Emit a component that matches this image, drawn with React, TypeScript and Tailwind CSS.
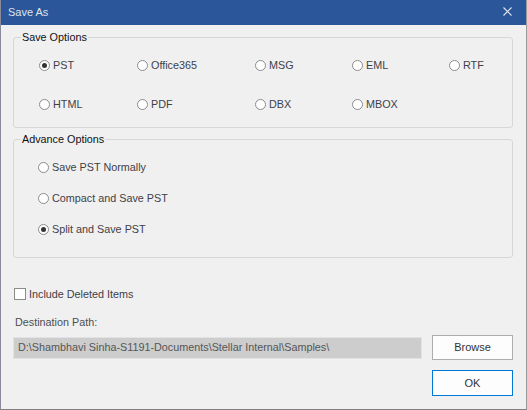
import React from "react";

function Radio({ label, checked = false }: { label: string; checked?: boolean }) {
  return (
    <div className="flex items-center gap-[3px] h-[16px]">
      <span className="w-[11px] h-[11px] rounded-full border border-[#8c8c8c] bg-white flex items-center justify-center shrink-0">
        {checked && <span className="w-[5px] h-[5px] rounded-full bg-[#333333]" />}
      </span>
      <span className="text-[#404048] leading-[16px]">{label}</span>
    </div>
  );
}

function Group({ title, className, children }: { title: string; className: string; children: React.ReactNode }) {
  return (
    <div className={"relative border border-[#d7d7d7] rounded-[3px] " + className}>
      <span className="absolute left-[7px] -top-[9px] px-[1px] bg-[#f0f0f0] text-[#111111] leading-[16px]">{title}</span>
      {children}
    </div>
  );
}

export default function App() {
  return (
    <div className="w-[527px] h-[410px] bg-[#f0f0f0] border-l border-r border-b border-l-[#8a8a9a] border-r-[#9a9a9a] border-b-[#7f7f7f] flex flex-col font-['Segoe_UI','Liberation_Sans',Arial,sans-serif] text-[10.8px] overflow-hidden">
      <div className="h-[25px] shrink-0 bg-[#2b579a] flex items-center justify-between pl-[7px] pr-[14px]">
        <span className="text-[#dde3ee] text-[11px] leading-none">Save As</span>
        <svg width="9" height="9" viewBox="0 0 9 9" className="mb-[3px]">
          <path d="M0.5 0.5 L8.5 8.5 M8.5 0.5 L0.5 8.5" stroke="#dfe4ee" strokeWidth="1.1" />
        </svg>
      </div>

      <div className="flex flex-col pl-[12px]">
        <Group title="Save Options" className="mt-[12px] w-[500px] h-[91px]">
          <div className="flex flex-col gap-[23px] pt-[19px] pl-[25px]">
            <div className="flex">
              <div className="w-[98px]"><Radio label="PST" checked /></div>
              <div className="w-[118px]"><Radio label="Office365" /></div>
              <div className="w-[97px]"><Radio label="MSG" /></div>
              <div className="w-[97px]"><Radio label="EML" /></div>
              <div><Radio label="RTF" /></div>
            </div>
            <div className="flex">
              <div className="w-[98px]"><Radio label="HTML" /></div>
              <div className="w-[118px]"><Radio label="PDF" /></div>
              <div className="w-[97px]"><Radio label="DBX" /></div>
              <div className="w-[97px]"><Radio label="MBOX" /></div>
            </div>
          </div>
        </Group>

        <Group title="Advance Options" className="mt-[11px] w-[500px] h-[119px]">
          <div className="flex flex-col gap-[15px] pt-[19px] pl-[24px]">
            <Radio label="Save PST Normally" />
            <Radio label="Compact and Save PST" />
            <Radio label="Split and Save PST" checked />
          </div>
        </Group>

        <div className="mt-[30px] flex items-center gap-[3px] h-[12px] ml-[1px]">
          <span className="w-[12px] h-[12px] border border-[#8c8c8c] bg-white shrink-0" />
          <span className="text-[#404048] leading-[16px]">Include Deleted Items</span>
        </div>

        <div className="mt-[14px] ml-[2px] h-[16px] leading-[16px] text-[#4e4e4e]">Destination Path:</div>

        <div className="mt-[5px] flex items-center gap-[10px] h-[25px]">
          <div className="w-[409px] h-[22px] border border-[#e2e2e2] bg-[#cdcdcd] flex items-center pl-[4px] text-[#555555] whitespace-nowrap overflow-hidden">
            D:\Shambhavi Sinha-S1191-Documents\Stellar Internal\Samples\
          </div>
          <button className="w-[81px] h-[25px] border border-[#adadad] bg-[#fdfdfd] text-[#333333] text-[11px] flex items-center justify-center">
            Browse
          </button>
        </div>

        <div className="mt-[10px] flex justify-start pl-[419px]">
          <button className="w-[81px] h-[26px] border border-[#0078d7] bg-[#fdfdfd] text-[#333333] text-[11px] flex items-center justify-center">
            OK
          </button>
        </div>
      </div>
    </div>
  );
}
